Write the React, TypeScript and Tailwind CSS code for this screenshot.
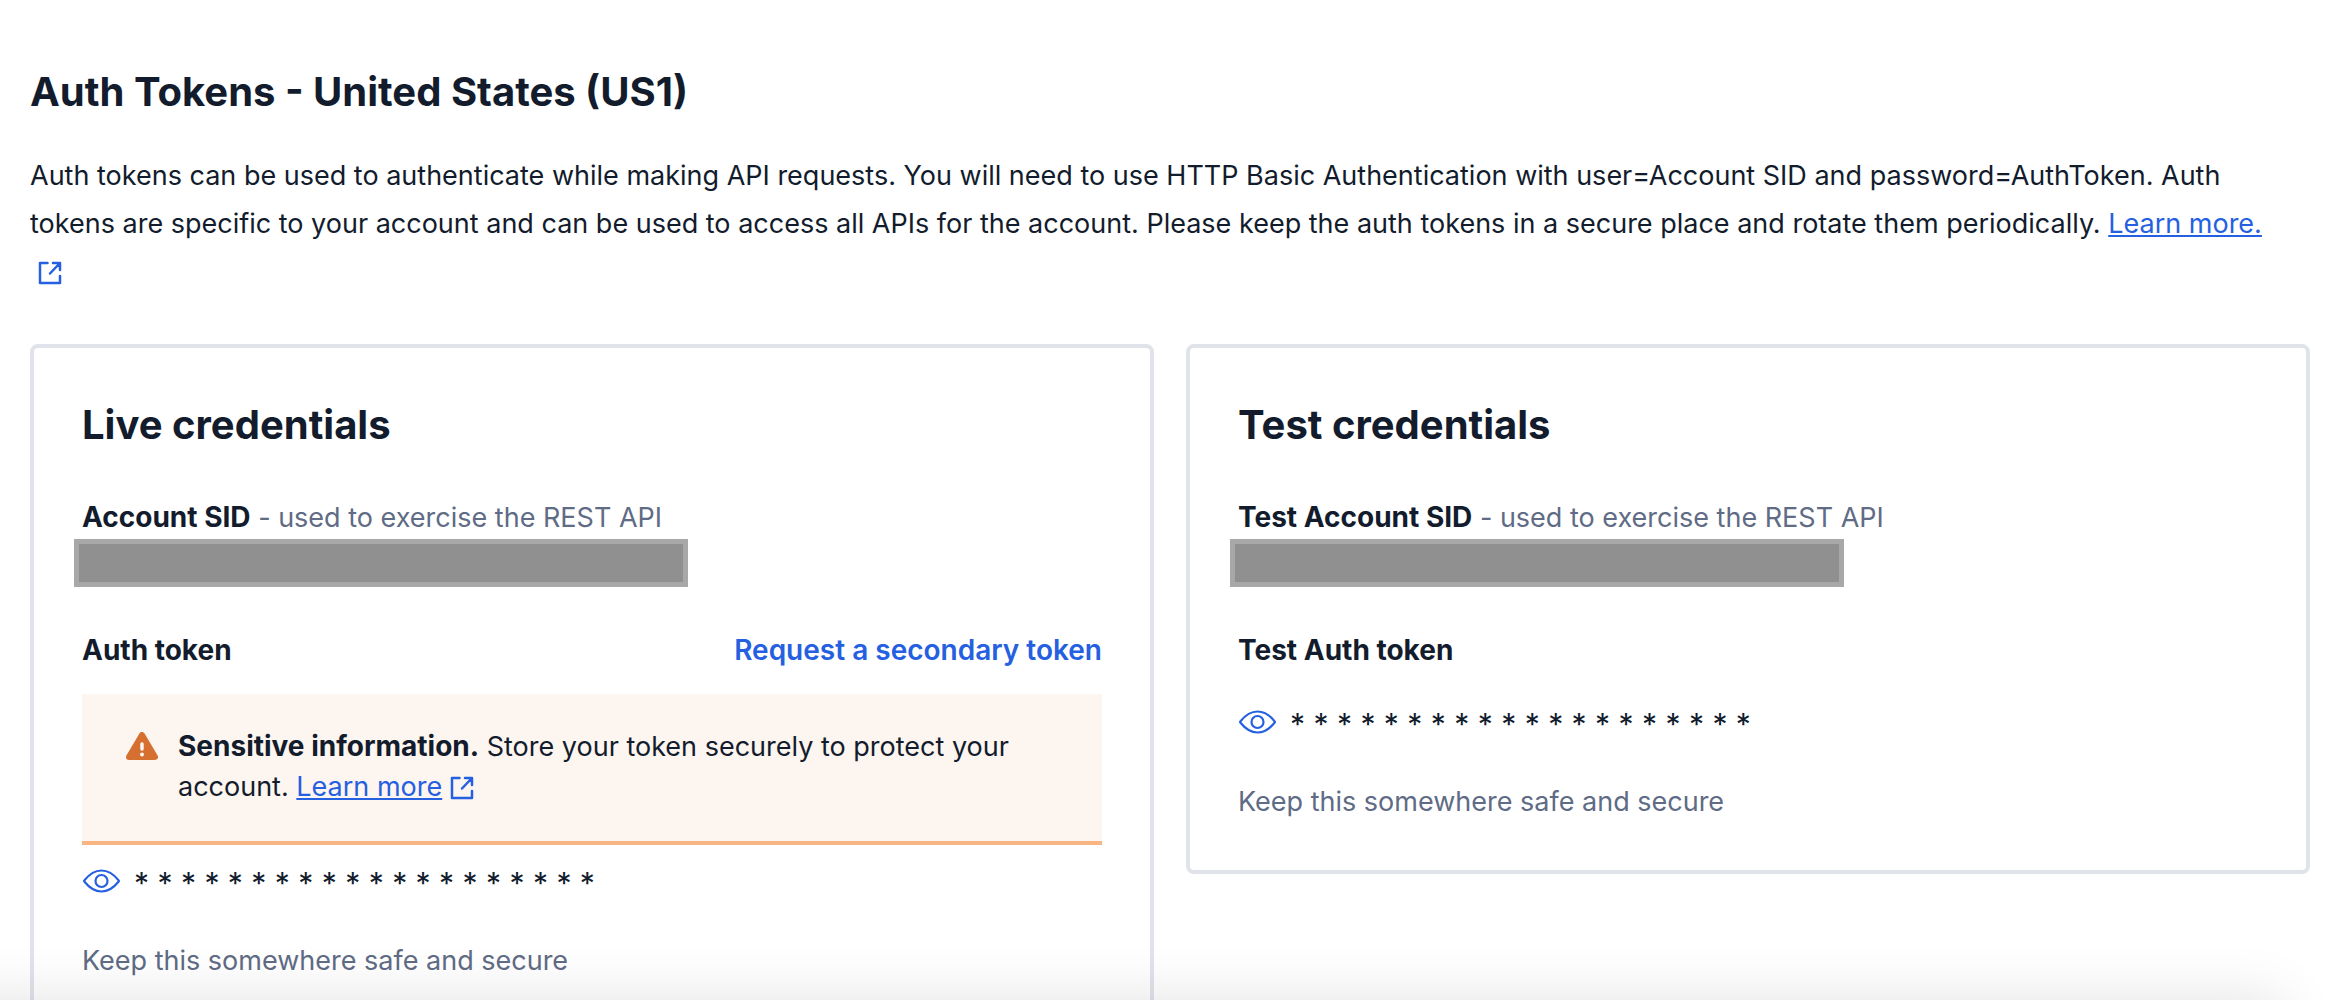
import React from "react";

function ExternalIcon() {
  return (
    <svg viewBox="0 0 24 24" className="ml-2 inline-block h-6 w-6 align-[-4px]" fill="none" stroke="currentColor" strokeWidth="2.500" strokeLinecap="round" strokeLinejoin="round" aria-hidden="true">
      <path d="M9.500 2H2v20h20v-7M15 2h7v7M22 2L12 12.500" />
    </svg>
  );
}

function EyeIcon() {
  return (
    <svg viewBox="0 0 38 24" className="h-6 w-[38px]" fill="none" stroke="currentColor" strokeWidth="2.200" aria-hidden="true">
      <path d="M2.500 11.200C7.500 5 12.500 1.500 19.500 1.500S31.500 5 36.500 11.200Q37.200 12 36.500 12.800C31.500 19 26.500 22.500 19.500 22.500S7.500 19 2.500 12.800Q1.800 12 2.500 11.200Z" strokeLinejoin="round" />
      <circle cx="19.500" cy="12" r="6" />
    </svg>
  );
}

function WarningIcon() {
  return (
    <svg viewBox="0 0 32 28" className="mt-[6px] h-7 w-8 shrink-0" aria-hidden="true">
      <path d="M16 3L29 25H3Z" fill="#d67030" stroke="#d67030" strokeWidth="6" strokeLinejoin="round" />
      <path d="M16 12v5" stroke="#fdf5ef" strokeWidth="3.500" strokeLinecap="round" />
      <circle cx="16" cy="22.500" r="2" fill="#fdf5ef" />
    </svg>
  );
}

function SidField({ label }: { label: string }) {
  return (
    <section className="mt-11">
      <p className="leading-10">
        <strong className="text-[28px] font-bold">{label}</strong>
        <span className="text-[#606b85]"> - used to exercise the REST API</span>
      </p>
      <div className="mt-px -ml-2 h-12 w-[614px] max-w-full border-[5px] border-[#a8a8a8] bg-[#909090]" />
    </section>
  );
}

function MaskedToken() {
  return (
    <div className="flex h-10 items-center gap-[14px]">
      <button type="button" aria-label="Show token" className="text-[#2460e0]">
        <EyeIcon />
      </button>
      <span className="pt-1 text-[30px] leading-10">{Array(20).fill("*").join(" ")}</span>
    </div>
  );
}

const card = "rounded-lg border-4 border-[#e1e3ea] px-12 pt-[49px] pb-12";

export default function App() {
  return (
    <main className="relative h-screen overflow-hidden bg-white px-[30px] pt-[66px] font-['Inter',sans-serif] text-[27px] text-[#121c2d]">
      <h1 className="text-[40px] leading-[52px] font-bold">Auth Tokens - United States (US1)</h1>
      <p className="mt-[34px] mr-10 leading-[48px]">
        Auth tokens can be used to authenticate while making API requests. You will need to use HTTP Basic Authentication with user=Account SID and password=AuthToken. Auth tokens are specific to your account and can be used to access all APIs for the account. Please keep the auth tokens in a secure place and rotate them periodically.{" "}
        <a href="#learn" className="text-[#2460e0]">
          <span className="underline">Learn more.</span> <ExternalIcon />
        </a>
      </p>
      <div className="mt-12 mr-3 grid grid-cols-2 items-start gap-8">
        <section className={card}>
          <h2 className="text-[40px] leading-[56px] font-bold">Live credentials</h2>
          <SidField label="Account SID" />
          <div className="mt-[43px] flex items-center justify-between text-[28px] leading-10">
            <h3 className="font-bold">Auth token</h3>
            <button type="button" className="font-semibold text-[#2460e0]">Request a secondary token</button>
          </div>
          <div className="mt-6 flex gap-5 border-b-4 border-[#f8b583] bg-[#fdf5ef] px-11 pt-8 pb-[34px]">
            <WarningIcon />
            <p className="max-w-[860px] leading-10">
              <strong className="text-[28px] font-bold">Sensitive information.</strong> Store your token securely to protect your account.{" "}
              <a href="#secure" className="text-[#2460e0]">
                <span className="underline">Learn more</span>
                <ExternalIcon />
              </a>
            </p>
          </div>
          <div className="mt-4">
            <MaskedToken />
          </div>
          <p className="mt-10 leading-10 text-[#606b85]">Keep this somewhere safe and secure</p>
        </section>
        <section className={card}>
          <h2 className="text-[40px] leading-[56px] font-bold">Test credentials</h2>
          <SidField label="Test Account SID" />
          <h3 className="mt-[43px] text-[28px] leading-10 font-bold">Test Auth token</h3>
          <div className="mt-8">
            <MaskedToken />
          </div>
          <p className="mt-10 leading-10 text-[#606b85]">Keep this somewhere safe and secure</p>
        </section>
      </div>
      <div className="pointer-events-none absolute top-full right-[70px] -left-20 h-20 shadow-[0_0_60px_rgba(0,0,0,0.12)]" />
    </main>
  );
}
